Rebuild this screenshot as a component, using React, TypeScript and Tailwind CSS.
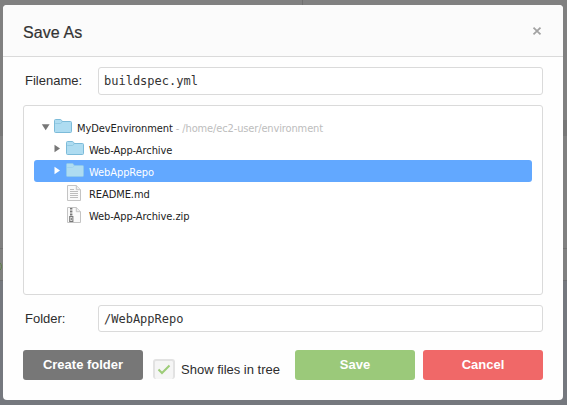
import React from "react";

function Arrow({ open, white }: { open?: boolean; white?: boolean }) {
  return (
    <svg width="9" height="9" viewBox="0 0 9 9" className={`shrink-0 ${white ? "text-white" : "text-[#777]"}`}>
      <path d={open ? "M.8 1.2h7.8L4.7 7.2z" : "M2.5 .8v7.4l5.5-3.7z"} fill="currentColor" />
    </svg>
  );
}

function Folder({ selected }: { selected?: boolean }) {
  return (
    <svg width="19" height="16" viewBox="0 0 19 16" className="shrink-0">
      <path
        d="M.5 13.5V2.5Q.5 1.5 1.5 1.5H6.4Q7.2 1.5 7.7 2.5L8.1 3.5H16.5Q17.5 3.5 17.5 4.5V13.5Q17.5 14.5 16.5 14.5H1.5Q.5 14.5.5 13.5Z"
        fill="#aedcf1"
        stroke={selected ? "#8cc8ee" : "#7cbbd9"}
      />
      <path d="M1.2 5.5H6.5L8.4 3.9" fill="none" stroke={selected ? "#9ad0ed" : "#8bc5df"} strokeWidth=".8" />
    </svg>
  );
}

function FileIcon({ zip }: { zip?: boolean }) {
  return (
    <svg width="14" height="16" viewBox="0 0 14 16" className="shrink-0">
      <path d="M.5.5H9.3L13.5 4.7V15.5H.5Z" fill="#fafafa" stroke="#c4c4c4" />
      <path d="M9.3.5V4.7H13.5" fill="#eee" stroke="#c4c4c4" />
      {zip ? (
        <>
          <path d="M4.2 1V10" stroke="#777" strokeWidth="2.4" strokeDasharray="1 .5" />
          <rect x="2.7" y="9.5" width="3.2" height="5" fill="#ddd" stroke="#777" />
          <path d="M4.3 11v2" stroke="#777" />
        </>
      ) : (
        <path d="M3 4.5h4M3 6.5h8M3 8.5h8M3 10.5h8M3 12.5h8" stroke="#bdbdbd" />
      )}
    </svg>
  );
}

const label = "font-['Liberation_Sans',Arial,sans-serif] text-[13px] text-[#2d2d2d]";
const field =
  "flex w-[445px] items-center rounded-[3px] border border-[#dadada] bg-white pl-[5px] font-['DejaVu_Sans_Mono',monospace] text-[12px] text-[#333]";
const button =
  "flex h-[30px] w-[120px] items-center justify-center rounded-[3px] pb-px font-['Liberation_Sans',Arial,sans-serif] text-[13px] font-bold text-white";

export default function App() {
  return (
    <div className="relative h-[405px] w-[567px] overflow-hidden bg-[#808080] pt-[5px] pl-[3px]">
      <div className="absolute top-0 left-[302px] h-[5px] w-px bg-[#707070]" />
      <div className="absolute top-[120px] left-0 h-4 w-full bg-[#777]" />
      <div className="absolute top-[248px] left-0 h-px w-full bg-[#727272]" />
      <div className="absolute top-[261px] -left-[9px] h-[11px] w-[11px] rounded-full border border-[#5e8046]" />
      <div className="absolute top-[280px] left-0 h-[125px] w-full border-t border-[#6d6e70] bg-[#75787e]" />

      <div className="relative h-[395px] w-[560px] rounded-[4px] bg-[#fefefe]">
        <header className="flex h-[52px] items-center justify-between rounded-t-[4px] border-b border-[#dadada] bg-[#fbfbfb] pr-[21px] pl-[19px]">
          <h1 className="mt-1 ml-px font-['Liberation_Sans',Arial,sans-serif] text-[16px] tracking-[0.1px] text-[#333] [-webkit-text-stroke:0.2px_#333]">Save As</h1>
          <svg width="10" height="10" viewBox="0 0 10 10">
            <path d="M1.5 1.7 8.5 8.3M8.5 1.7 1.5 8.3" stroke="#a2a2a2" strokeWidth="1.8" />
          </svg>
        </header>

        <main className="flex flex-col gap-[10px] px-5 pt-[10px]">
          <div className="flex h-7 justify-between">
            <span className={`${label} flex items-center pl-[2px]`}>Filename:</span>
            <div className={field}>buildspec.yml</div>
          </div>

          <div className="h-[190px] rounded-[3px] border border-[#dadada] bg-white px-[10px] pt-[10px] font-['DejaVu_Sans_Condensed','DejaVu_Sans',sans-serif] text-[11px] tracking-[-0.08px] text-[#222]">
            <div className="flex h-[22px] items-center pl-[7px]">
              <Arrow open />
              <span className="ml-1 flex -translate-y-px"><Folder /></span>
              <span className="ml-1 pt-[5px]">MyDevEnvironment</span>
              <span className="ml-[3px] pt-[5px] tracking-[-0.13px] text-[#bdbdbd]">- /home/ec2-user/environment</span>
            </div>
            <div className="flex h-[22px] items-center pl-[18px]">
              <span className="mb-[2px]"><Arrow /></span>
              <span className="ml-[5px] flex -translate-y-px"><Folder /></span>
              <span className="ml-1 pt-[5px]">Web-App-Archive</span>
            </div>
            <div className="flex h-[22px] items-center rounded-[3px] bg-[#62a8ff] pl-[18px] text-white">
              <span className="mb-[2px]"><Arrow white /></span>
              <span className="ml-[5px] flex -translate-y-px"><Folder selected /></span>
              <span className="ml-1 pt-[5px]">WebAppRepo</span>
            </div>
            <div className="flex h-[22px] items-center pl-[33px]">
              <FileIcon />
              <span className="ml-2 pt-[5px]">README.md</span>
            </div>
            <div className="flex h-[22px] items-center pl-[33px]">
              <FileIcon zip />
              <span className="ml-2 pt-[5px]">Web-App-Archive.zip</span>
            </div>
          </div>

          <div className="flex h-[27px] justify-between">
            <span className={`${label} flex items-center pl-[2px]`}>Folder:</span>
            <div className={field}>/WebAppRepo</div>
          </div>

          <div className="mt-2 flex items-start">
            <button className={`${button} bg-[#777]`}>Create folder</button>
            <div className="mt-[9px] ml-[10px] flex h-5 items-center">
              <span className="flex h-5 w-[22px] items-center justify-center rounded-[3px] border-2 border-b-0 border-[#e2e2e2] bg-[#f5f5f5]">
                <svg width="14" height="12" viewBox="0 0 14 12">
                  <path d="M1.5 5.5 5 9 12.5 1.5" fill="none" stroke="#9dcc78" strokeWidth="2" />
                </svg>
              </span>
              <span className={`${label} ml-[6px] pt-[2px]`}>Show files in tree</span>
            </div>
            <div className="ml-auto flex gap-2">
              <button className={`${button} bg-[#9bc97a]`}>Save</button>
              <button className={`${button} bg-[#f06868]`}>Cancel</button>
            </div>
          </div>
        </main>
      </div>
    </div>
  );
}
